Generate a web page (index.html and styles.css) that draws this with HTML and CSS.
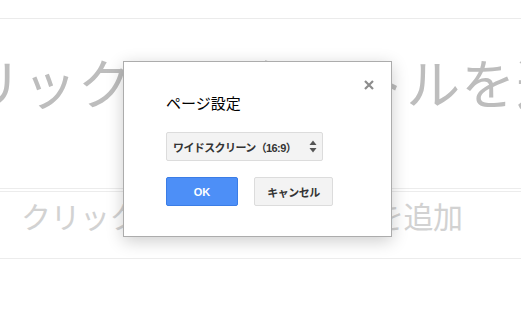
FILE: index.html
```html
<!DOCTYPE html>
<html>
  <head>
    <title>ページ設定</title>
    <meta charset="utf-8">
    <link rel="stylesheet" href="styles.css">
  </head>
  <body>
    <div class="slide">
      <div class="slide-top"></div>
      <div class="title-box">
        <div class="title-text">クリックしてタイトルを追加</div>
      </div>
      <div class="subtitle-box">
        <div class="subtitle-text">クリックしてサブタイトルを追加</div>
      </div>
    </div>

    <div class="dialog">
      <div class="dialog-close">
        <svg width="10" height="10" viewBox="0 0 10 10">
          <path d="M1 1 L9 9 M9 1 L1 9" stroke="#8c8c8c" stroke-width="2.2" fill="none"/>
        </svg>
      </div>
      <div class="dialog-title">ページ設定</div>
      <div class="menu-button">
        <span class="menu-caption">ワイドスクリーン（16:9）</span>
        <svg class="menu-arrows" width="8" height="13" viewBox="0 0 8 13">
          <path d="M4 0.5 L7.5 5 L0.5 5 Z" fill="#555"/>
          <path d="M4 12.5 L7.5 8 L0.5 8 Z" fill="#555"/>
        </svg>
      </div>
      <div class="dialog-buttons">
        <div class="btn btn-action">OK</div>
        <div class="btn btn-standard">キャンセル</div>
      </div>
    </div>
  </body>
</html>
```

FILE: styles.css
```css
html, body {
  margin: 0;
  height: 100%;
  background: #fff;
  overflow: hidden;
  font-family: "Liberation Sans", "Noto Sans CJK JP", sans-serif;
}

.slide {
  width: 521px;
}

.slide-top {
  height: 18px;
  border-bottom: 1px solid #ebebeb;
}

.title-box {
  height: 170px;
  border-bottom: 1px solid #ececec;
  display: flex;
  justify-content: center;
  padding-left: 18px;
  box-sizing: border-box;
}

.title-text {
  flex: none;
  white-space: nowrap;
  margin-top: 36px;
  font-family: "Noto Sans CJK JP", sans-serif;
  font-size: 54px;
  line-height: 54px;
  letter-spacing: 1px;
  color: #bdbdbd;
}

.subtitle-box {
  margin-top: 2px;
  height: 66px;
  border-top: 1px solid #ececec;
  border-bottom: 1px solid #ececec;
  padding-left: 21px;
}

.subtitle-text {
  white-space: nowrap;
  margin-top: 8px;
  font-family: "Noto Sans CJK JP", sans-serif;
  font-size: 30px;
  line-height: 30px;
  letter-spacing: -0.5px;
  color: #d2d2d2;
}

.dialog {
  position: absolute;
  left: 123px;
  top: 61px;
  width: 183px;
  padding: 31px 42px 30px 42px;
  background: #fff;
  border: 1px solid #acacac;
  box-shadow: 0 4px 16px rgba(0, 0, 0, 0.2);
}

.dialog-close {
  position: absolute;
  top: 18px;
  right: 17px;
  width: 10px;
  height: 10px;
  line-height: 0;
}

.dialog-title {
  font-family: "Noto Sans CJK JP", sans-serif;
  font-size: 15px;
  line-height: 20px;
  color: #000;
}

.menu-button {
  margin-top: 19px;
  width: 157px;
  height: 29px;
  box-sizing: border-box;
  display: flex;
  align-items: center;
  justify-content: space-between;
  padding: 0 5px 0 6px;
  background: #f3f3f3;
  border: 1px solid #dcdcdc;
  border-radius: 2px;
}

.menu-caption {
  font-size: 11px;
  font-weight: bold;
  color: #333;
  letter-spacing: -0.6px;
  white-space: nowrap;
}

.dialog-buttons {
  margin-top: 16px;
  display: flex;
  gap: 16px;
}

.btn {
  height: 29px;
  box-sizing: border-box;
  display: flex;
  align-items: center;
  justify-content: center;
  font-size: 11px;
  font-weight: bold;
  border-radius: 2px;
}

.btn-action {
  width: 72px;
  background: #4d8ff7;
  border: 1px solid #3b7de6;
  color: #fff;
}

.btn-standard {
  width: 79px;
  background: #f3f3f3;
  border: 1px solid #dcdcdc;
  color: #333;
  letter-spacing: -0.5px;
}
```
